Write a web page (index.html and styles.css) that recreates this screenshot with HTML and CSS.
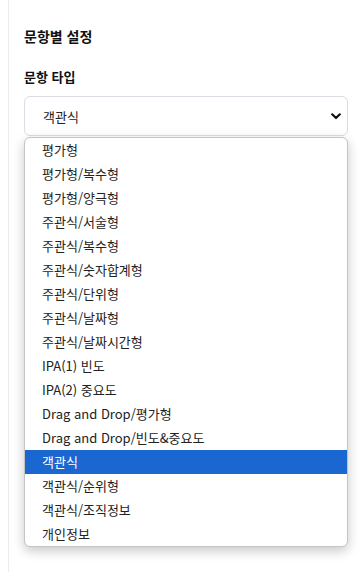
FILE: index.html
```html
<!DOCTYPE html>
<html lang="ko">
<head>
    <meta charset="UTF-8">
    <meta name="viewport" content="width=device-width, initial-scale=1.0">
    <title>문항별 설정</title>
    <link rel="stylesheet" href="styles.css">
</head>
<body>
    <div class="panel">
        <h2 class="title">문항별 설정</h2>

        <div class="field">
            <label class="label">문항 타입</label>
            <div class="select-wrap">
                <div class="select">
                    <span>객관식</span>
                    <svg class="chev" width="10" height="7" viewBox="0 0 10 7">
                        <path d="M1.2 1.3 L5 5 L8.8 1.3" fill="none" stroke="#111" stroke-width="2.2" stroke-linecap="round" stroke-linejoin="round"/>
                    </svg>
                </div>

                <ul class="options">
                    <li>평가형</li>
                    <li>평가형/복수형</li>
                    <li>평가형/양극형</li>
                    <li>주관식/서술형</li>
                    <li>주관식/복수형</li>
                    <li>주관식/숫자합계형</li>
                    <li>주관식/단위형</li>
                    <li>주관식/날짜형</li>
                    <li>주관식/날짜시간형</li>
                    <li>IPA(1) 빈도</li>
                    <li>IPA(2) 중요도</li>
                    <li>Drag and Drop/평가형</li>
                    <li>Drag and Drop/빈도&amp;중요도</li>
                    <li class="selected">객관식</li>
                    <li>객관식/순위형</li>
                    <li>객관식/조직정보</li>
                    <li>개인정보</li>
                </ul>
            </div>
        </div>
    </div>
</body>
</html>
```

FILE: styles.css
```css
* {
    margin: 0;
    padding: 0;
    box-sizing: border-box;
}

body {
    background: #fff;
    font-family: 'Segoe UI', 'Noto Sans CJK KR', 'Noto Sans', sans-serif;
    color: #111;
}

.panel {
    margin-left: 8px;
    min-height: 572px;
    border-left: 1px solid #ececec;
    padding: 28px 14px 0 15px;
}

.title {
    font-size: 14px;
    font-weight: bold;
    line-height: 16px;
}

.field {
    margin-top: 25px;
}

.label {
    display: block;
    font-size: 13px;
    font-weight: bold;
    line-height: 16px;
    margin-bottom: 11px;
}

.select-wrap {
    position: relative;
}

.select {
    height: 40px;
    border: 1px solid #dcdce4;
    border-radius: 6px;
    display: flex;
    align-items: center;
    justify-content: space-between;
    padding: 0 6px 0 18px;
    font-size: 13px;
    color: #222;
}

.options {
    list-style: none;
    position: absolute;
    top: 41px;
    left: 0;
    right: 0;
    background: #fff;
    border: 1px solid #c4c4c4;
    border-radius: 6px;
    box-shadow: 0 4px 12px rgba(0,0,0,0.22);
    overflow: hidden;
}

.options li {
    height: 24px;
    line-height: 24px;
    padding-left: 17px;
    font-size: 13px;
    color: #222;
}

.options li.selected {
    background: #1a67d2;
    color: #fff;
}
```
